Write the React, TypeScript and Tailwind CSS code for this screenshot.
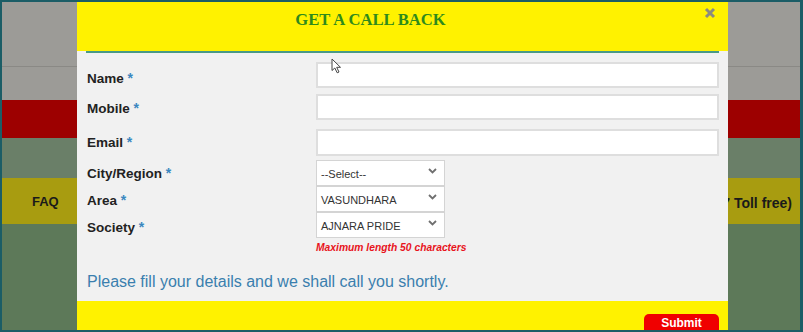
import React from "react";

function SideCol({ right }: { right?: boolean }) {
  return (
    <div className={right ? "w-[72px] flex flex-col shrink-0" : "w-[75px] flex flex-col shrink-0"}>
      <div className="h-[64px] bg-[#9c9b97]" />
      <div className="h-[1px] bg-[#8a8985]" />
      <div className="h-[33px] bg-[#9c9b97]" />
      <div className="h-[38px] bg-[#9d0000]" />
      <div className="h-[40px] bg-[#6a7f68]" />
      {right ? (
        <div className="h-[46px] bg-[#a89c10] flex items-center justify-end overflow-hidden pr-[8px] pt-[5px]">
          <span className="shrink-0 whitespace-nowrap text-[14px] font-bold text-[#1a1a1a]">
            1800 300 0567 (24x7 Toll free)
          </span>
        </div>
      ) : (
        <div className="h-[46px] bg-[#a89c10] flex items-center pl-[30px] pt-[1px]">
          <span className="text-[13px] font-bold text-[#1a1a1a]">FAQ</span>
        </div>
      )}
      <div className="flex-1 bg-[#5d7959]" />
    </div>
  );
}

function Label({ text, pt }: { text: string; pt?: string }) {
  return (
    <div className={"w-[229px] shrink-0 text-[13.5px] font-bold text-[#222] " + (pt ?? "")}>
      {text} <span className="text-[14px] text-[#3a87c0]">*</span>
    </div>
  );
}

function Chevron() {
  return (
    <svg width="9" height="6" viewBox="0 0 9 6" className="mb-[5px]">
      <path d="M1 1 L4.5 4.5 L8 1" fill="none" stroke="#6f6f6f" strokeWidth="1.8" />
    </svg>
  );
}

function SelectBox({ text }: { text: string }) {
  return (
    <div className="w-[129px] h-[26px] bg-white border border-[#d4d4d4] flex items-center justify-between pl-[4px] pr-[7px]">
      <span className="text-[11px] text-[#333] pt-[3px]">{text}</span>
      <Chevron />
    </div>
  );
}

export default function App() {
  return (
    <div className="w-[803px] h-[332px] border-t-2 border-l-2 border-r-[3px] border-b-2 border-[#1b5d66] flex overflow-hidden font-['Liberation_Sans',Arial,sans-serif]">
      <SideCol />
      <div className="w-[651px] shrink-0 relative flex flex-col">
        <div className="h-[49px] bg-[#fff200] pt-[6px] pr-[64px] text-center">
          <span className="font-['Liberation_Serif','Times_New_Roman',serif] font-bold text-[16.6px] leading-[20px] text-[#2f8a1c]">
            GET A CALL BACK
          </span>
        </div>
        <svg className="absolute left-[627px] top-[5px]" width="12" height="12" viewBox="0 0 12 12">
          <path d="M2 2 L10 10 M10 2 L2 10" stroke="#8b8b80" strokeWidth="3" />
        </svg>
        <div className="h-[250px] bg-[#f1f1f1] flex flex-col">
          <div className="mx-[9px] h-[2px] bg-[#4a9a86]" />
          <div className="pl-[10px] pr-[9px] flex flex-col">
            <div className="mt-[9px] h-[26px] flex items-center">
              <Label text="Name" pt="pt-[7px]" />
              <div className="flex-1 h-[26px] bg-white border-2 border-[#dedede]" />
            </div>
            <div className="mt-[6px] h-[26px] flex items-center">
              <Label text="Mobile" pt="pt-[4px]" />
              <div className="flex-1 h-[26px] bg-white border-2 border-[#dedede]" />
            </div>
            <div className="mt-[9px] h-[27px] flex items-center">
              <Label text="Email" pt="pt-[1px]" />
              <div className="flex-1 h-[27px] bg-white border-2 border-[#dedede]" />
            </div>
            <div className="mt-[4px] h-[26px] flex items-center">
              <Label text="City/Region" pt="pt-[2px]" />
              <SelectBox text="--Select--" />
            </div>
            <div className="h-[26px] flex items-center">
              <Label text="Area" pt="pt-[4px]" />
              <SelectBox text="VASUNDHARA" />
            </div>
            <div className="h-[26px] flex items-center">
              <Label text="Society" pt="pt-[5px]" />
              <SelectBox text="AJNARA PRIDE" />
            </div>
            <div className="ml-[229px] mt-[4px] leading-[12px] text-[10.3px] font-bold italic text-[#e8141c]">
              Maximum length 50 characters
            </div>
            <div className="mt-[18px] leading-[20px] text-[16px] text-[#3a7fae]">
              Please fill your details and we shall call you shortly.
            </div>
          </div>
        </div>
        <div className="flex-1 bg-[#fff200] overflow-hidden flex justify-end pr-[9px] pt-[13px]">
          <div className="w-[75px] h-[22px] bg-[#f00000] rounded-[5px] text-white font-bold text-[12px] leading-[14px] pt-[2px] text-center">
            Submit
          </div>
        </div>
        <svg className="absolute left-[254px] top-[56px]" width="11" height="16" viewBox="0 0 11 16">
          <path d="M1 1 L1 12.5 L3.8 10 L6.2 14.8 L8 14 L5.7 9.3 L9.5 9.3 Z" fill="#fff" stroke="#444" strokeWidth="1" strokeLinejoin="round" />
        </svg>
      </div>
      <SideCol right />
    </div>
  );
}
